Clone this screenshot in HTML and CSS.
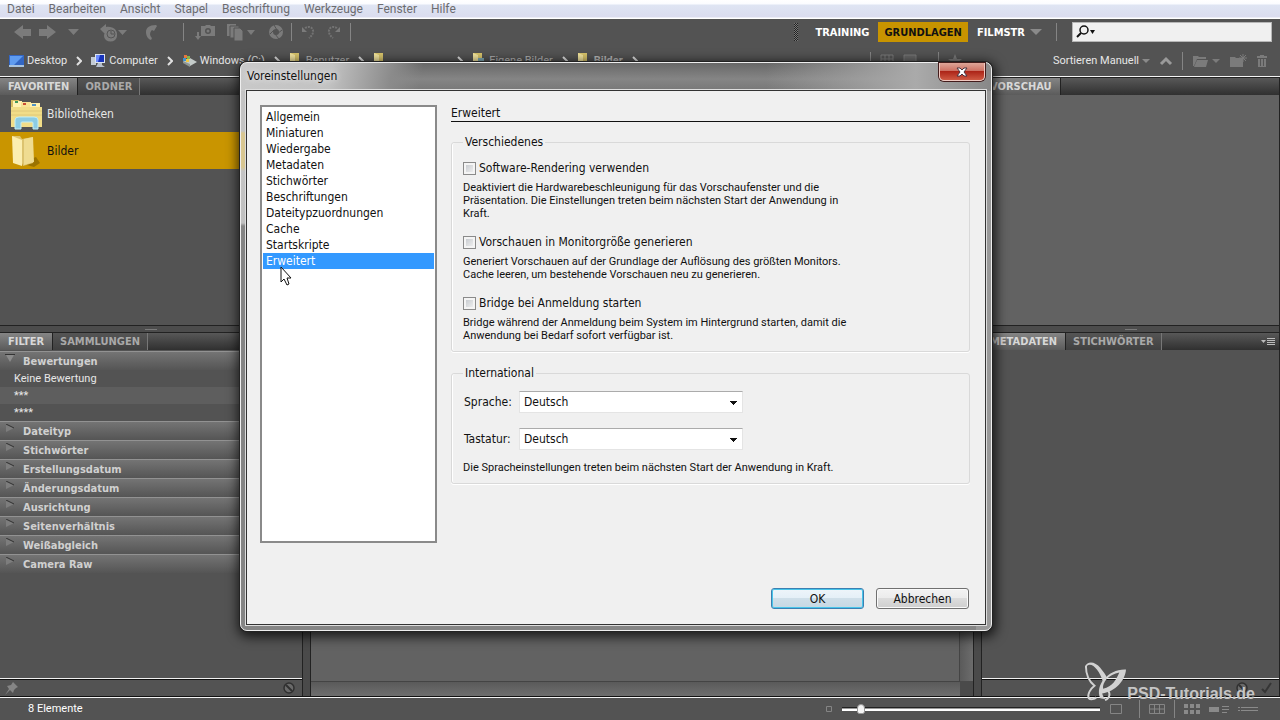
FILE: index.html
```html
<!DOCTYPE html>
<html lang="de">
<head>
  <meta charset="UTF-8">
  <meta name="viewport" content="width=device-width, initial-scale=1.0">
  <title>Voreinstellungen</title>
  <link rel="stylesheet" href="styles.css">
</head>
<body>

  <nav class="menubar">
    <a href="#">Datei</a>
    <a href="#">Bearbeiten</a>
    <a href="#">Ansicht</a>
    <a href="#">Stapel</a>
    <a href="#">Beschriftung</a>
    <a href="#">Werkzeuge</a>
    <a href="#">Fenster</a>
    <a href="#">Hilfe</a>
  </nav>

  <header class="appbar">
    <div class="toolbar">
      <div class="tools nav-tools">
        <button aria-label="Zurück"><svg width="22" height="20" viewBox="0 0 22 20"><path d="M3 10 12 3V7H20V14H12V17Z"/></svg></button>
        <button aria-label="Vor"><svg width="22" height="20" viewBox="0 0 22 20"><path d="M19 10 10 3V7H2V14H10V17Z"/></svg></button>
        <button aria-label="Verlauf"><svg width="20" height="20" viewBox="0 0 20 20"><path d="M5 7H16L10.500 13Z"/></svg></button>
      </div>
      <div class="tools recent-tools">
        <button aria-label="Letzte Ordner"><svg width="30" height="20" viewBox="0 0 30 20"><path d="M2 7 8 2V5C15 4 20 8 19 14A6.500 5.500 0 1 1 6 14C6 12 7 10 8 9L7 12Z"/><circle cx="13" cy="12" r="4" fill="none" stroke="#555" stroke-width="1"/><path d="M13 9V12H16" fill="none" stroke="#555"/><path d="M20 8H29L24.500 13Z"/></svg></button>
        <button aria-label="Zurück zur Anwendung"><svg width="20" height="20" viewBox="0 0 20 20"><path d="M14 3C7 3 4 6 4 10 4 14 6 17 9 18L10 16C7 13 8 10 10 8L12 9 15 4Z"/></svg></button>
      </div>
      <span class="sep"></span>
      <div class="tools import-tools">
        <button aria-label="Fotos laden"><svg width="22" height="20" viewBox="0 0 22 20"><path fill-rule="evenodd" d="M7 4H11L12 3H16L17 4H21V14H7ZM14 6A3 3 0 1 0 14 12A3 3 0 1 0 14 6Z"/><circle cx="14" cy="9" r="1.500"/><path d="M3 10H5V14H7L4 18 1 14H3Z"/></svg></button>
        <button aria-label="Verfeinern"><svg width="30" height="20" viewBox="0 0 30 20"><path d="M1 2H10V14H1Z"/><path d="M4 4H13V16H4Z" stroke="#555"/><path d="M8 6H14L17 9V19H8Z" stroke="#555"/><path d="M21 8H29L25 13Z"/></svg></button>
        <button aria-label="In Camera Raw öffnen"><svg width="20" height="20" viewBox="0 0 20 20"><circle cx="10" cy="10" r="5" fill="none" stroke="#7b7b7b" stroke-width="4"/><path d="M8 3 11 8M16 8 11 12M13 17 9 12M4 12 8 8" stroke="#535353" fill="none"/></svg></button>
      </div>
      <span class="sep"></span>
      <div class="tools rotate-tools">
        <button aria-label="Nach links drehen"><svg width="20" height="20" viewBox="0 0 20 20"><path d="M6 6C13 2 18 10 10 16" fill="none" stroke="#737373" stroke-width="2" stroke-dasharray="2 1"/><path d="M3 5V10H8Z"/></svg></button>
        <button aria-label="Nach rechts drehen"><svg width="20" height="20" viewBox="0 0 20 20"><path d="M14 6C7 2 2 10 10 16" fill="none" stroke="#737373" stroke-width="2" stroke-dasharray="2 1"/><path d="M17 5V10H12Z"/></svg></button>
      </div>
      <span class="sep"></span>
      <div class="workspaces">
        <span class="grip"></span>
        <button>TRAINING</button>
        <button class="active">GRUNDLAGEN</button>
        <button class="cut">FILMSTR</button>
        <svg width="12" height="8" viewBox="0 0 12 8"><path d="M0 1H12L6 7Z" fill="#8a8a8a"/></svg>
      </div>
      <span class="sep"></span>
      <label class="search">
        <svg width="20" height="14" viewBox="0 0 20 14"><circle cx="8" cy="5" r="4" fill="none" stroke="#111" stroke-width="1.500"/><path d="M5 8 1 12" stroke="#111" stroke-width="2"/><path d="M14 5H19L16.500 9Z" fill="#111"/></svg>
        <input type="text" aria-label="Suchen">
      </label>
    </div>

    <div class="pathbar">
      <a href="#"><svg width="15" height="13" viewBox="0 0 15 13"><path d="M0 1H15V12H0Z" fill="#3266c4"/><path d="M1 2H14L5 11H1Z" fill="#5f9cf0"/><path d="M0 11H15V13H0Z" fill="#a9c4df"/></svg>Desktop</a>
      <svg class="chev" width="6" height="10" viewBox="0 0 6 10"><path d="M1 1 5 5 1 9"/></svg>
      <a href="#"><svg width="15" height="14" viewBox="0 0 15 14"><path d="M0 3H5V11H0Z" fill="#c3cbd5"/><path d="M4 0H14V9H4Z" fill="#dce4f0"/><path d="M5 1H13V8H5Z" fill="#1834bd"/><path d="M5 1H9L7 8H5Z" fill="#6d8dff"/><path d="M7 9H11V11L14 13H5Z" fill="#b6c0ce"/></svg>Computer</a>
      <svg class="chev" width="6" height="10" viewBox="0 0 6 10"><path d="M1 1 5 5 1 9"/></svg>
      <a href="#"><svg width="15" height="13" viewBox="0 0 15 13"><path d="M1 7 8 4 15 8 8 12Z" fill="#c4cbc9"/><path d="M1 7 8 10V13L1 9Z" fill="#8f9896"/><path d="M2 1H5V4H2Z" fill="#e7773d"/><path d="M5 2H8V5H5Z" fill="#82b64b"/><path d="M1 4H4V7H1Z" fill="#3e93ce"/><path d="M4 5H7V8H4Z" fill="#efc740"/></svg>Windows (C:)</a>
      <svg class="chev" width="6" height="10" viewBox="0 0 6 10"><path d="M1 1 5 5 1 9"/></svg>
      <a href="#" class="dim"><svg width="12" height="16" viewBox="0 0 12 16"><path d="M1 0H10V15H1Z" fill="#d9c56c"/><path d="M1 0 6 2V16L1 14Z" fill="#f5e7a0"/></svg>Benutzer</a>
      <svg class="chev" width="6" height="10" viewBox="0 0 6 10"><path d="M1 1 5 5 1 9"/></svg>
      <a href="#" class="user-folder" aria-label="Benutzerordner"><svg width="12" height="16" viewBox="0 0 12 16"><path d="M1 0H10V15H1Z" fill="#d9c56c"/><path d="M1 0 6 2V16L1 14Z" fill="#f5e7a0"/></svg></a>
      <svg class="chev" width="6" height="10" viewBox="0 0 6 10"><path d="M1 1 5 5 1 9"/></svg>
      <a href="#" class="dim"><svg width="12" height="16" viewBox="0 0 12 16"><path d="M1 0H10V15H1Z" fill="#d9c56c"/><path d="M1 0 6 2V16L1 14Z" fill="#f5e7a0"/><path d="M6 5H12V12H6Z" fill="#7fa9b5"/></svg>Eigene Bilder</a>
      <svg class="chev" width="6" height="10" viewBox="0 0 6 10"><path d="M1 1 5 5 1 9"/></svg>
      <a href="#" class="dim strong"><svg width="12" height="16" viewBox="0 0 12 16"><path d="M1 0H10V15H1Z" fill="#d9c56c"/><path d="M1 0 6 2V16L1 14Z" fill="#f5e7a0"/></svg>Bilder</a>
      <svg class="chev" width="6" height="10" viewBox="0 0 6 10"><path d="M1 1 5 5 1 9"/></svg>
      <div class="sortbar">
        <div class="view-tools">
          <span class="sep"></span>
          <svg width="14" height="14" viewBox="0 0 14 14"><path d="M1 1H13V13H1ZM1 5H13M1 9H13M5 1V13M9 1V13" fill="none" stroke="#7b7b7b"/></svg>
          <svg width="26" height="14" viewBox="0 0 26 14"><path d="M1 1H13V13H1Z" fill="#666" stroke="#7b7b7b"/><path d="M18 7H26L22 11Z" fill="#7b7b7b"/></svg>
          <span class="sep"></span>
          <svg width="28" height="14" viewBox="0 0 28 14"><path d="M7 0 9 5H14L10 8 12 13 7 10 2 13 4 8 0 5H5Z" fill="#7b7b7b"/><path d="M19 7H27L23 11Z" fill="#7b7b7b"/></svg>
        </div>
        <button class="sort">Sortieren Manuell<svg width="8" height="6" viewBox="0 0 8 6"><path d="M0 1H8L4 5Z" fill="#8a8a8a"/></svg></button>
        <button aria-label="Aufsteigend"><svg width="14" height="10" viewBox="0 0 14 10"><path d="M2 8 7 3 12 8" fill="none" stroke="#9a9a9a" stroke-width="3"/></svg></button>
        <span class="sep"></span>
        <button aria-label="Zuletzt verwendete Datei"><svg width="28" height="14" viewBox="0 0 28 14"><path d="M1 12V2H6L7 3H14V5H5L2 12ZM5 6H16L14 13H2Z"/><path d="M20 5H28L24 9Z"/></svg></button>
        <button aria-label="Neuer Ordner"><svg width="18" height="14" viewBox="0 0 18 14"><path d="M1 3H6L7 4H14V13H1Z"/><path d="M14 0V8M10 4H18M11 1 17 7M17 1 11 7" stroke="#7b7b7b"/></svg></button>
        <button aria-label="Löschen"><svg width="12" height="14" viewBox="0 0 12 14"><path d="M1 2H4V1H8V2H11V4H1ZM2 5H10V13H2Z"/><path d="M4.500 5V12M7.500 5V12" stroke="#555"/></svg></button>
      </div>
    </div>
  </header>

  <main class="workspace">
    <div class="column left">
      <section class="panel top">
        <div class="tabs"><button class="active">FAVORITEN</button><button>ORDNER</button></div>
        <div class="favorites">
          <a href="#" class="favorite"><svg width="36" height="34" viewBox="0 0 36 34"><path d="M3 3H11L12 6H32V30H3Z" fill="#d5bc62"/><path d="M5 4H14V10H5Z" fill="#fff3b5"/><path d="M13 5H23V11H13Z" fill="#f8e395"/><path d="M22 6H32V12H22Z" fill="#fff0ac"/><path d="M7 4H10V6H7Z" fill="#42985b"/><path d="M15 6H18V8H15Z" fill="#ca4d35"/><path d="M24 7H28V9H24Z" fill="#5393c2"/><path d="M3 10H34V30H3Z" fill="#f1dd88"/><path d="M3 14H34M3 18H34" stroke="#e0c878"/><path d="M7 32V23Q7 20 11 20H26Q30 20 30 23V32H25V26Q25 25 24 25H14Q13 25 13 26V32Z" fill="#8ccce4" stroke="#c2edf5"/></svg>Bibliotheken</a>
          <a href="#" class="favorite active"><svg width="36" height="34" viewBox="0 0 36 34"><path d="M12 29 28 23 32 29 26 33Z" fill="#9b7300"/><path d="M4 2 12 2 14 5 25 3V29L15 32Z" fill="#dcc36f"/><path d="M4 2 14 6V32L5 29Z" fill="#fbeeb0"/><path d="M16 5 25 3 26 28 16 31Z" fill="#efdc91"/></svg>Bilder</a>
        </div>
      </section>
      <div class="splitter"></div>
      <section class="panel filter">
        <div class="tabs"><button class="active">FILTER</button><button>SAMMLUNGEN</button></div>
        <button class="filter-head"><svg width="10" height="9" viewBox="0 0 10 9"><path d="M1 1H9L5 8Z" fill="#8b8b8b"/><path d="M0 .5H10" stroke="#333"/></svg>Bewertungen</button>
        <ul class="ratings">
          <li>Keine Bewertung</li>
          <li>***</li>
          <li>****</li>
        </ul>
        <button class="filter-head"><svg width="10" height="9" viewBox="0 0 10 9"><path d="M1 1V8L9 4Z" fill="#7d7d7d"/><path d="M1 0 9 4" stroke="#333"/></svg>Dateityp</button>
        <button class="filter-head"><svg width="10" height="9" viewBox="0 0 10 9"><path d="M1 1V8L9 4Z" fill="#7d7d7d"/><path d="M1 0 9 4" stroke="#333"/></svg>Stichwörter</button>
        <button class="filter-head"><svg width="10" height="9" viewBox="0 0 10 9"><path d="M1 1V8L9 4Z" fill="#7d7d7d"/><path d="M1 0 9 4" stroke="#333"/></svg>Erstellungsdatum</button>
        <button class="filter-head"><svg width="10" height="9" viewBox="0 0 10 9"><path d="M1 1V8L9 4Z" fill="#7d7d7d"/><path d="M1 0 9 4" stroke="#333"/></svg>Änderungsdatum</button>
        <button class="filter-head"><svg width="10" height="9" viewBox="0 0 10 9"><path d="M1 1V8L9 4Z" fill="#7d7d7d"/><path d="M1 0 9 4" stroke="#333"/></svg>Ausrichtung</button>
        <button class="filter-head"><svg width="10" height="9" viewBox="0 0 10 9"><path d="M1 1V8L9 4Z" fill="#7d7d7d"/><path d="M1 0 9 4" stroke="#333"/></svg>Seitenverhältnis</button>
        <button class="filter-head"><svg width="10" height="9" viewBox="0 0 10 9"><path d="M1 1V8L9 4Z" fill="#7d7d7d"/><path d="M1 0 9 4" stroke="#333"/></svg>Weißabgleich</button>
        <button class="filter-head"><svg width="10" height="9" viewBox="0 0 10 9"><path d="M1 1V8L9 4Z" fill="#7d7d7d"/><path d="M1 0 9 4" stroke="#333"/></svg>Camera Raw</button>
        <div class="panel-foot">
          <svg width="14" height="14" viewBox="0 0 14 14"><path d="M8 1 13 6 11 7 9 9 8 12 5 9 0 14 4 8 2 5 6 4Z" fill="#858585"/></svg>
          <svg width="14" height="14" viewBox="0 0 14 14"><circle cx="7" cy="7" r="5" fill="#6a6a6a" stroke="#303030" stroke-width="1.500"/><path d="M4 4 10 10" stroke="#303030" stroke-width="2"/></svg>
        </div>
      </section>
    </div>

    <div class="column center">
      <div class="content"></div>
      <div class="vscroll"></div>
      <div class="hscroll"></div>
    </div>

    <div class="column right">
      <section class="panel top preview">
        <div class="tabs"><button class="active">VORSCHAU</button></div>
      </section>
      <div class="splitter"></div>
      <section class="panel">
        <div class="tabs"><button class="active">METADATEN</button><button>STICHWÖRTER</button>
          <svg class="panel-menu" width="14" height="10" viewBox="0 0 14 10"><path d="M0 3H5L2.500 6Z" fill="#bbb"/><path d="M6 1.500H14M6 3.500H14M6 5.500H14M6 7.500H14" stroke="#bbb"/></svg>
        </div>
        <div class="panel-foot end">
          <svg width="14" height="14" viewBox="0 0 14 14"><circle cx="7" cy="7" r="5" fill="#6a6a6a" stroke="#303030" stroke-width="1.500"/><path d="M4 4 10 10" stroke="#303030" stroke-width="2"/></svg>
          <svg width="12" height="14" viewBox="0 0 12 14"><path d="M1 8 4 11 10 2" fill="none" stroke="#353535" stroke-width="2"/></svg>
        </div>
      </section>
    </div>
  </main>

  <footer class="statusbar">
    <span>8 Elemente</span>
    <div class="zoom">
      <svg width="6" height="6" viewBox="0 0 6 6"><path d="M.5.5H5.500V5.500H.5Z" fill="none" stroke="#858585"/></svg>
      <input type="range" aria-label="Miniaturgröße" min="0" max="100" value="6">
      <svg width="12" height="10" viewBox="0 0 12 10"><path d="M.5.5H11.500V9.500H.5Z" fill="none" stroke="#858585"/></svg>
    </div>
    <div class="view-modes">
      <span class="sep"></span>
      <svg width="16" height="10" viewBox="0 0 16 10"><path d="M.5.5H15.500V9.500H.5ZM.5 5H15.500M5.500 0V10M10.500 0V10" fill="none" stroke="#858585"/></svg>
      <span class="sep"></span>
      <svg width="16" height="10" viewBox="0 0 16 10"><path d="M0 0H4V4H0ZM6 0H10V4H6ZM12 0H16V4H12ZM0 6H4V10H0ZM6 6H10V10H6ZM12 6H16V10H12Z" fill="#8a8a8a"/></svg>
      <svg width="20" height="8" viewBox="0 0 20 8"><path d="M0 2H10V7H0Z" fill="#8a8a8a"/><path d="M13 1.500H20M13 4.500H20M13 7.500H18" stroke="#8a8a8a"/></svg>
      <svg width="20" height="8" viewBox="0 0 20 8"><path d="M0 2.500H2M3 2.500H20M0 5.500H2M3 5.500H20" stroke="#8a8a8a"/></svg>
    </div>
  </footer>

  <div class="dialog" role="dialog" aria-labelledby="dialog-title">
    <div class="titlebar">
      <h1 id="dialog-title">Voreinstellungen</h1>
      <button class="close" aria-label="Schließen"><svg width="12" height="10" viewBox="0 0 12 10"><path d="M1 1H4L6 3 8 1H11L8 5 11 9H8L6 7 4 9H1L4 5Z" fill="#fff" stroke="#4b3440"/></svg></button>
    </div>
    <div class="client">
      <div class="prefs">
        <div class="categories">
          <button>Allgemein</button>
          <button>Miniaturen</button>
          <button>Wiedergabe</button>
          <button>Metadaten</button>
          <button>Stichwörter</button>
          <button>Beschriftungen</button>
          <button>Dateitypzuordnungen</button>
          <button>Cache</button>
          <button>Startskripte</button>
          <button class="selected">Erweitert</button>
        </div>
        <form class="page">
          <h2>Erweitert</h2>
          <fieldset class="misc">
            <legend>Verschiedenes</legend>
            <div class="option">
              <label><input type="checkbox">Software-Rendering verwenden</label>
              <p>Deaktiviert die Hardwarebeschleunigung für das Vorschaufenster und die<br>Präsentation. Die Einstellungen treten beim nächsten Start der Anwendung in<br>Kraft.</p>
            </div>
            <div class="option">
              <label><input type="checkbox">Vorschauen in Monitorgröße generieren</label>
              <p>Generiert Vorschauen auf der Grundlage der Auflösung des größten Monitors.<br>Cache leeren, um bestehende Vorschauen neu zu generieren.</p>
            </div>
            <div class="option">
              <label><input type="checkbox">Bridge bei Anmeldung starten</label>
              <p>Bridge während der Anmeldung beim System im Hintergrund starten, damit die<br>Anwendung bei Bedarf sofort verfügbar ist.</p>
            </div>
          </fieldset>
          <fieldset class="intl">
            <legend>International</legend>
            <div class="field">
              <label for="sprache">Sprache:</label>
              <select id="sprache"><option>Deutsch</option></select>
            </div>
            <div class="field">
              <label for="tastatur">Tastatur:</label>
              <select id="tastatur"><option>Deutsch</option></select>
            </div>
            <p>Die Spracheinstellungen treten beim nächsten Start der Anwendung in Kraft.</p>
          </fieldset>
        </form>
      </div>
      <div class="actions">
        <button class="default">OK</button>
        <button>Abbrechen</button>
      </div>
    </div>
  </div>

  <svg class="cursor" width="12" height="20" viewBox="0 0 12 20"><path d="M1 1V16L4 13 7 19 9 18 7 12H11Z" fill="#fff" stroke="#111"/></svg>

  <div class="watermark">
    <svg width="44" height="42" viewBox="0 0 46 44"><path d="M3 5C3 16 7 22 12 26 8 29 4 35 6 39 8 41 12 40 14 38" fill="none" stroke="#d2d2d2" stroke-width="2"/><path d="M2 6C5-1 13 1 18 7 21 11 24 14 25 18L21 22C18 12 12 4 7 4 5 4 4 5 3 8Z" fill="#d2d2d2"/><path fill-rule="evenodd" d="M18 39C12 25 27 8 45 9 44 21 34 32 20 34 21 37 22 39 24 40ZM21 29C31 27 35 19 38 12 27 14 20 22 21 29Z" fill="#d2d2d2"/><path d="M23 41C28 39 29 34 26 31" fill="none" stroke="#d2d2d2" stroke-width="2"/></svg>
    <span>PSD-Tutorials.de</span>
  </div>

</body>
</html>
```
FILE: styles.css
```css
* {
  box-sizing: border-box;
}

body {
  margin: 0;
  height: 100vh;
  display: flex;
  flex-direction: column;
  overflow: hidden;
  background: #535353;
  color: #e6e6e6;
  font-family: "DejaVu Sans Condensed", "DejaVu Sans", sans-serif;
  font-size: 11px;
}

button, input, select {
  font: inherit;
  color: inherit;
}

button {
  border: 0;
  padding: 0;
  background: none;
}

a {
  color: inherit;
  text-decoration: none;
}

svg {
  display: block;
  flex: none;
}

h1, h2, p, ul {
  margin: 0;
  padding: 0;
  font-weight: normal;
}

/* Small labels run narrower than the rest */
.menubar, .pathbar, .ratings, .statusbar, fieldset p {
  font-family: Roboto, Arial, sans-serif;
}

/* Menu */
.menubar {
  display: flex;
  gap: 14px;
  height: 19px;
  flex: none;
  padding-left: 7px;
  line-height: 18px;
  font-size: 12px;
  color: #6c6c70;
  background: linear-gradient(#fff 0, #fbfcff 4px, #dfe5f3 5px, #dadcef 17px, #fff 18px);
}

.appbar {
  flex: none;
  height: 58px;
  background: #535353;
  border-bottom: 1px solid #f4f4f4;
}

.toolbar {
  display: flex;
  align-items: center;
  height: 26px;
  padding: 0 8px 0 11px;
}

.tools {
  display: flex;
  gap: 4px;
  fill: #7b7b7b;
}

.recent-tools {
  gap: 14px;
  margin: 0 21px 0 15px;
}

.import-tools {
  gap: 10px;
  margin: 0 5px 0 10px;
}

.rotate-tools {
  margin: 0 7px;
}

.sep {
  width: 1px;
  height: 18px;
  background: #858585;
}

.workspaces {
  display: flex;
  align-items: center;
  gap: 3px;
  margin-left: auto;
  margin-right: 14px;
  font-weight: bold;
  color: #fff;
}

.workspaces button {
  height: 20px;
  padding: 0 6px;
}

.workspaces .active {
  background: #c89400;
  color: #111;
}

.workspaces .cut {
  padding-right: 2px;
}

.grip {
  width: 4px;
  height: 18px;
  margin-right: 8px;
  background: repeating-conic-gradient(#222 0 25%, #777 0 50%) 0 0 / 2px 2px;
}

.search {
  display: flex;
  align-items: center;
  width: 200px;
  height: 20px;
  margin-left: 15px;
  padding-left: 3px;
  background: #f0f0f0;
  border: 1px solid #b7b7b7;
}

.search input {
  flex: 1;
  min-width: 0;
  border: 0;
  outline: 0;
  background: none;
  color: #111;
}

.pathbar {
  display: flex;
  align-items: center;
  gap: 9px;
  height: 31px;
  padding: 0 12px 0 9px;
}

.pathbar a {
  display: flex;
  align-items: center;
  gap: 3px;
}

.pathbar .dim {
  gap: 5px;
  color: #b5b5b5;
}

.pathbar .strong {
  font-weight: bold;
}

.pathbar .user-folder {
  width: 75px;
}

.chev path {
  fill: none;
  stroke: #e0e0e0;
  stroke-width: 2;
}

.sortbar {
  display: flex;
  align-items: center;
  gap: 9px;
  margin-left: auto;
  fill: #7b7b7b;
}

.view-tools {
  display: flex;
  align-items: center;
  gap: 9px;
  margin-right: 68px;
}

.sort {
  display: flex;
  align-items: center;
  gap: 3px;
}

/* Panels */
.workspace {
  flex: 1;
  min-height: 0;
  display: grid;
  grid-template-columns: 303px 1fr 299px;
  gap: 7px;
  background: #4a4a4a;
}

.column {
  display: flex;
  flex-direction: column;
  min-height: 0;
  border: 1px solid #222;
  border-width: 0 1px;
}

.left {
  border-left: 0;
}

.panel {
  flex: 1;
  display: flex;
  flex-direction: column;
  background: #535353;
}

.panel.top {
  flex: none;
  height: 248px;
}

.panel.preview {
  background: #626262;
}

.splitter {
  height: 7px;
  flex: none;
  border-top: 1px solid #222;
  background: linear-gradient(#7a7a7a, #7a7a7a) 50% 3px / 12px 1px no-repeat #4c4c4c;
}

.tabs {
  display: flex;
  height: 18px;
  flex: none;
  border-top: 1px solid #222;
  background: linear-gradient(#585858, #303030);
  font-weight: bold;
}

.tabs button {
  padding: 0 7px;
  border-right: 1px solid #777;
  color: #a9a9a9;
  background: linear-gradient(#555, #404040);
}

.tabs .active {
  padding: 0 8px;
  border-right-color: #222;
  color: #d8d8d8;
  background: linear-gradient(#858585, #5b5b5b);
}

.filter .tabs {
  margin-bottom: 1px;
}

.panel-menu {
  margin: 4px 4px 0 auto;
}

.favorites {
  font-size: 12px;
}

.favorite {
  display: flex;
  align-items: center;
  gap: 3px;
  height: 37px;
  padding-left: 8px;
}

.favorite.active {
  background: #c99500;
  color: #111;
}

.filter-head {
  display: flex;
  align-items: center;
  gap: 8px;
  height: 19px;
  flex: none;
  padding: 0 5px;
  border-top: 1px solid #929292;
  background: linear-gradient(#747474, #555);
  color: #d0d0d0;
  font-weight: bold;
}

.filter-head svg {
  align-self: flex-start;
  margin-top: 2px;
}

.ratings {
  list-style: none;
}

.ratings li {
  height: 17px;
  padding-left: 14px;
  line-height: 17px;
}

.ratings li:nth-child(2) {
  background: #5e5e5e;
}

.panel-foot {
  display: flex;
  align-items: center;
  justify-content: space-between;
  height: 18px;
  margin-top: auto;
  padding: 0 6px 0 5px;
  border-top: 1px solid #f0f0f0;
  box-shadow: inset 0 1px #111;
}

.panel-foot.end {
  justify-content: flex-end;
  gap: 12px;
}

.center {
  display: grid;
  grid-template: 1fr 15px / 1fr 13px;
}

.content {
  background: #626262;
  border-right: 1px solid #444;
}

.vscroll {
  background: linear-gradient(90deg, #5a5a5a, #6c6c6c);
}

.hscroll {
  border-top: 1px solid #444;
  background: linear-gradient(#5a5a5a, #6e6e6e);
}

/* Status bar */
.statusbar {
  display: flex;
  align-items: center;
  flex: none;
  height: 24px;
  padding: 0 22px 0 28px;
  border-top: 1px solid #111;
  box-shadow: inset 0 1px #f4f4f4;
  color: #fff;
}

.zoom {
  display: flex;
  align-items: center;
  gap: 10px;
  margin-left: auto;
}

.zoom input {
  appearance: none;
  width: 258px;
  height: 12px;
  margin: 0;
  background: linear-gradient(#222 1px, #999 1px, #999 2px, #fff 2px) 0 4px / 100% 4px no-repeat;
}

.zoom input::-webkit-slider-thumb {
  appearance: none;
  width: 8px;
  height: 10px;
  border-radius: 5px 5px 3px 3px;
  background: #f4f4f4;
  border: 1px solid #999;
}

.view-modes {
  display: flex;
  align-items: center;
  gap: 9px;
  margin-left: 17px;
}

/* Preferences window */
.dialog {
  position: absolute;
  top: 62px;
  left: 240px;
  right: 288px;
  padding: 0 5px 5px;
  border: 1px solid #eee;
  border-radius: 7px;
  background:
    linear-gradient(100deg, #c9c9c9 0, #c2c2c2 90px, #8b8b8b 150px, transparent 180px) 0 0 / 100% 28px no-repeat,
    linear-gradient(90deg, transparent 70%, #aaa 90%, #888) 0 0 / 100% 28px no-repeat,
    linear-gradient(#686868, #858585 16px, #777 28px) 0 0 / 100% 28px no-repeat,
    linear-gradient(90deg, transparent 98%, #999 98%) 0 28px / 100% 100% no-repeat,
    linear-gradient(#c4c4c4 68px, #d9c791 70px, #d9c791 104px, #c4c4c4 108px, #c0c0c0 160px, #858585 163px, #858585);
  box-shadow: 0 0 0 1px #222, 1px 3px 12px 3px #000b;
  color: #111;
  font-size: 12px;
}

.titlebar {
  display: flex;
  justify-content: space-between;
  height: 27px;
  padding: 0 1px;
}

.titlebar h1 {
  font-size: 12px;
  line-height: 27px;
  text-shadow: 0 0 6px #fff;
}

.close {
  display: flex;
  align-items: center;
  justify-content: center;
  width: 46px;
  height: 18px;
  border: 1px solid #f0c8c0;
  border-top: 0;
  border-radius: 0 0 5px 5px;
  background: linear-gradient(#dda598, #cd7264 45%, #ad2518 50%, #cf5a43);
  box-shadow: 0 0 0 1px #431c1c;
}

.client {
  display: flex;
  flex-direction: column;
  padding: 14px 14px 15px 13px;
  border: 1px solid #333;
  box-shadow: 0 0 0 1px #ddd;
  background: #f0f0f0;
}

.prefs {
  display: flex;
  gap: 14px;
}

.categories {
  display: flex;
  flex-direction: column;
  width: 177px;
  height: 438px;
  padding: 2px 1px;
  border: 2px solid #8a8a8a;
  background: #fff;
}

.categories button {
  height: 16px;
  padding: 0 3px;
  text-align: left;
  line-height: 16px;
}

.categories .selected {
  background: #3399ff;
  color: #fff;
}

.page {
  flex: 1;
  padding: 1px 1px 0 0;
}

.page h2 {
  margin-bottom: 12px;
  border-bottom: 1px solid #111;
  font-size: 12px;
  line-height: 15px;
}

fieldset {
  margin: 0;
  padding: 10px 11px 9px;
  border: 1px solid #d9d9d9;
  border-radius: 3px;
  box-shadow: inset 1px 0 #fff, 0 1px #fff;
}

legend {
  padding: 0 2px;
  line-height: 16px;
}

fieldset p {
  font-size: 11px;
  line-height: 13px;
}

.option + .option {
  margin-top: 14px;
}

.option label {
  display: flex;
  align-items: center;
  gap: 3px;
  height: 16px;
  margin-bottom: 5px;
}

.option input {
  appearance: none;
  width: 13px;
  height: 13px;
  margin: 0;
  border: 1px solid #8a8a8a;
  background: linear-gradient(135deg, #bfc3c8, #f6f6f6);
  box-shadow: inset 0 0 0 2px #f4f4f4;
}

.intl {
  margin-top: 13px;
}

.field {
  display: flex;
  align-items: center;
  gap: 6px;
  margin-bottom: 15px;
  padding-left: 1px;
}

.field label {
  min-width: 49px;
}

.field + p {
  margin-top: -4px;
}

/* the two gradients are the halves of the arrow */
.field select {
  appearance: none;
  width: 224px;
  height: 22px;
  padding: 0 4px;
  border: 1px solid #e4e4e4;
  border-top-color: #ababab;
  border-radius: 0;
  background:
    linear-gradient(45deg, transparent 50%, #111 50%) right 8px top 9px / 4px 4px no-repeat,
    linear-gradient(135deg, #111 50%, transparent 50%) right 4px top 9px / 4px 4px no-repeat,
    #fff;
}

.actions {
  display: flex;
  justify-content: flex-end;
  gap: 12px;
  margin-top: 45px;
  padding-right: 2px;
}

.actions button {
  width: 93px;
  height: 21px;
  border: 1px solid #707070;
  border-radius: 3px;
  background: linear-gradient(#f3f3f3, #ebebeb 50%, #dcdcdc 50%, #cfcfcf);
  box-shadow: inset 0 0 0 1px #fafafa;
}

.actions .default {
  border-color: #3c7fb1;
  background: linear-gradient(#eef5fa, #e4eff7 50%, #cfdfe9 50%, #c6d8e3);
  box-shadow: inset 0 0 0 1px #48c5ea;
}

.cursor {
  position: absolute;
  left: 280px;
  top: 266px;
}

.watermark {
  position: absolute;
  right: 25px;
  bottom: 17px;
  display: flex;
  align-items: flex-end;
  color: #c5c5c5;
  font: bold 16px/18px "Liberation Sans", Arial, sans-serif;
}
```
